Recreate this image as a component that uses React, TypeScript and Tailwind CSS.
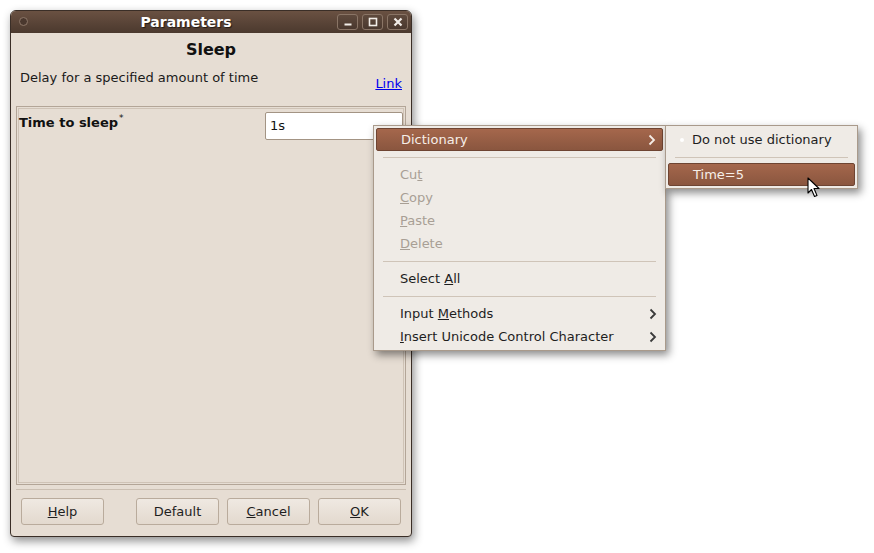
import React from "react";

const font = { fontFamily: '"DejaVu Sans", "Noto Sans", sans-serif' };

function Chevron({ light }: { light?: boolean }) {
  return (
    <svg width="8" height="12" viewBox="0 0 8 12" className="shrink-0">
      <path
        d="M1.5 1.5 L6 6 L1.5 10.5"
        fill="none"
        stroke={light ? "#f4ece6" : "#3a3a3a"}
        strokeWidth="1.8"
      />
    </svg>
  );
}

function TitleButton({ kind }: { kind: "min" | "max" | "close" }) {
  return (
    <div className="flex h-[16px] w-[21px] items-center justify-center rounded-[3px] border border-[#8a7566] bg-gradient-to-b from-[#5f4a3d] to-[#4a382e]">
      <svg width="10" height="10" viewBox="0 0 10 10">
        {kind === "min" && <rect x="1.5" y="6.5" width="7" height="2" fill="#f2ede8" />}
        {kind === "max" && (
          <rect x="1.5" y="1.5" width="7" height="7" fill="none" stroke="#f2ede8" strokeWidth="1.6" />
        )}
        {kind === "close" && (
          <path d="M1.5 1.5 L8.5 8.5 M8.5 1.5 L1.5 8.5" stroke="#f2ede8" strokeWidth="2.2" />
        )}
      </svg>
    </div>
  );
}

function Btn({ children }: { children: React.ReactNode }) {
  return (
    <div className="flex h-[27px] w-[83px] items-center justify-center rounded-[3px] border border-[#b9ab9c] bg-gradient-to-b from-[#efe9e2] to-[#e3d9ce] text-[13px] text-[#1e1e1e]">
      {children}
    </div>
  );
}

function MenuItem({
  children,
  disabled,
  arrow,
  active,
}: {
  children: React.ReactNode;
  disabled?: boolean;
  arrow?: boolean;
  active?: boolean;
}) {
  return (
    <div
      className={`flex h-[23px] items-center justify-between pl-[24px] pr-[6px] text-[13px] ${
        active
          ? "rounded-[2px] border border-[#6e4432] bg-gradient-to-b from-[#a5674c] to-[#8a563f] text-[#f6eee8]"
          : disabled
          ? "text-[#a89f95]"
          : "text-[#1e1e1e]"
      }`}
    >
      <span>{children}</span>
      {arrow ? <Chevron light={active} /> : null}
    </div>
  );
}

function Sep() {
  return (
    <div className="flex h-[12px] items-center px-[7px]">
      <div className="h-px w-full bg-[#cfc4b8]" />
    </div>
  );
}

export default function App() {
  return (
    <div className="relative h-[553px] w-[874px] overflow-hidden bg-white" style={font}>
      {/* dialog window */}
      <div className="ml-[10px] mt-[10px] flex h-[527px] w-[402px] flex-col rounded-t-[6px] rounded-b-[4px] border border-[#3a2e27] bg-[#e6ddd3] shadow-[2px_4px_10px_rgba(0,0,0,0.45)]">
        <div className="relative flex h-[22px] shrink-0 items-center justify-center rounded-t-[5px] bg-gradient-to-b from-[#6a5142] to-[#4b392e] pr-[50px]">
          <div className="absolute left-[8px] top-[6px] h-[9px] w-[9px] rounded-full border border-[#8d7768] bg-[#4a382e]" />
          <span className="text-[14px] font-bold text-white [text-shadow:1px_1px_1px_rgba(0,0,0,0.6)]">
            Parameters
          </span>
          <div className="absolute right-[3px] top-[3px] flex gap-[4px]">
            <TitleButton kind="min" />
            <TitleButton kind="max" />
            <TitleButton kind="close" />
          </div>
        </div>

        <div className="flex flex-1 flex-col px-[5px]">
          <div className="pt-[7px] text-center text-[16px] font-bold leading-[20px] text-[#111]">Sleep</div>
          <div className="mt-[6px] flex h-[34px] justify-between pl-[4px] pr-[4px]">
            <span className="pt-[4px] text-[13px] leading-[16px] text-[#1a1a1a]">
              Delay for a specified amount of time
            </span>
            <span className="self-end pb-[8px] text-[13px] leading-[16px] text-[#0000ee] underline">Link</span>
          </div>

          <div className="mt-[6px] h-[379px] border border-[#b3a597] p-px">
            <div className="flex h-full justify-between border border-[#cfc3b6] pl-0 pr-0 pt-[3px]">
              <span className="pt-[3px] text-[13px] font-bold leading-[16px] text-[#111]">
                Time to sleep
                <span className="relative top-[-6px] ml-px text-[9px] font-normal">*</span>
              </span>
              <div className="h-[28px] w-[138px] rounded-[2px] border border-[#a39484] bg-white pl-[4px] pt-[5px] text-[13px] leading-[16px] text-[#111]">
                1s
              </div>
            </div>
          </div>

          <div className="mt-[4px] h-px bg-[#cbbfb2]" />
          <div className="mt-[8px] flex items-center pl-[5px] pr-[5px]">
            <Btn>
              <span className="underline">H</span>elp
            </Btn>
            <div className="ml-[32px] flex gap-[8px]">
              <Btn>Default</Btn>
              <Btn>
                <span className="underline">C</span>ancel
              </Btn>
              <Btn>
                <span className="underline">O</span>K
              </Btn>
            </div>
          </div>
        </div>
      </div>

      {/* context menu */}
      <div className="absolute left-[373px] top-[125px] flex w-[293px] flex-col border border-[#a99a8b] bg-[#efebe6] p-[2px] shadow-[3px_4px_8px_rgba(0,0,0,0.45)]">
        <MenuItem active arrow>
          Dictionary
        </MenuItem>
        <Sep />
        <MenuItem disabled>
          Cu<span className="underline">t</span>
        </MenuItem>
        <MenuItem disabled>
          <span className="underline">C</span>opy
        </MenuItem>
        <MenuItem disabled>
          <span className="underline">P</span>aste
        </MenuItem>
        <MenuItem disabled>
          <span className="underline">D</span>elete
        </MenuItem>
        <Sep />
        <MenuItem>
          Select <span className="underline">A</span>ll
        </MenuItem>
        <Sep />
        <MenuItem arrow>
          Input <span className="underline">M</span>ethods
        </MenuItem>
        <MenuItem arrow>
          <span className="underline">I</span>nsert Unicode Control Character
        </MenuItem>
      </div>

      {/* submenu */}
      <div className="absolute left-[665px] top-[125px] flex w-[193px] flex-col border border-[#a99a8b] bg-[#efebe6] p-[2px] shadow-[3px_4px_8px_rgba(0,0,0,0.45)]">
        <div className="relative flex h-[23px] items-center pl-[24px] text-[13px] text-[#1e1e1e]">
          <span className="absolute left-[12px] top-[10px] h-[4px] w-[4px] rounded-full bg-white" />
          Do not use dictionary
        </div>
        <Sep />
        <MenuItem active>Time=5</MenuItem>
      </div>

      {/* mouse cursor */}
      <svg className="absolute left-[807px] top-[177px]" width="14" height="22" viewBox="0 0 14 22">
        <path
          d="M1 1 L1 16 L4.5 12.5 L7.5 19.5 L10 18.5 L7 11.5 L12 11.5 Z"
          fill="white"
          stroke="black"
          strokeWidth="1.1"
          strokeLinejoin="round"
        />
      </svg>
    </div>
  );
}
